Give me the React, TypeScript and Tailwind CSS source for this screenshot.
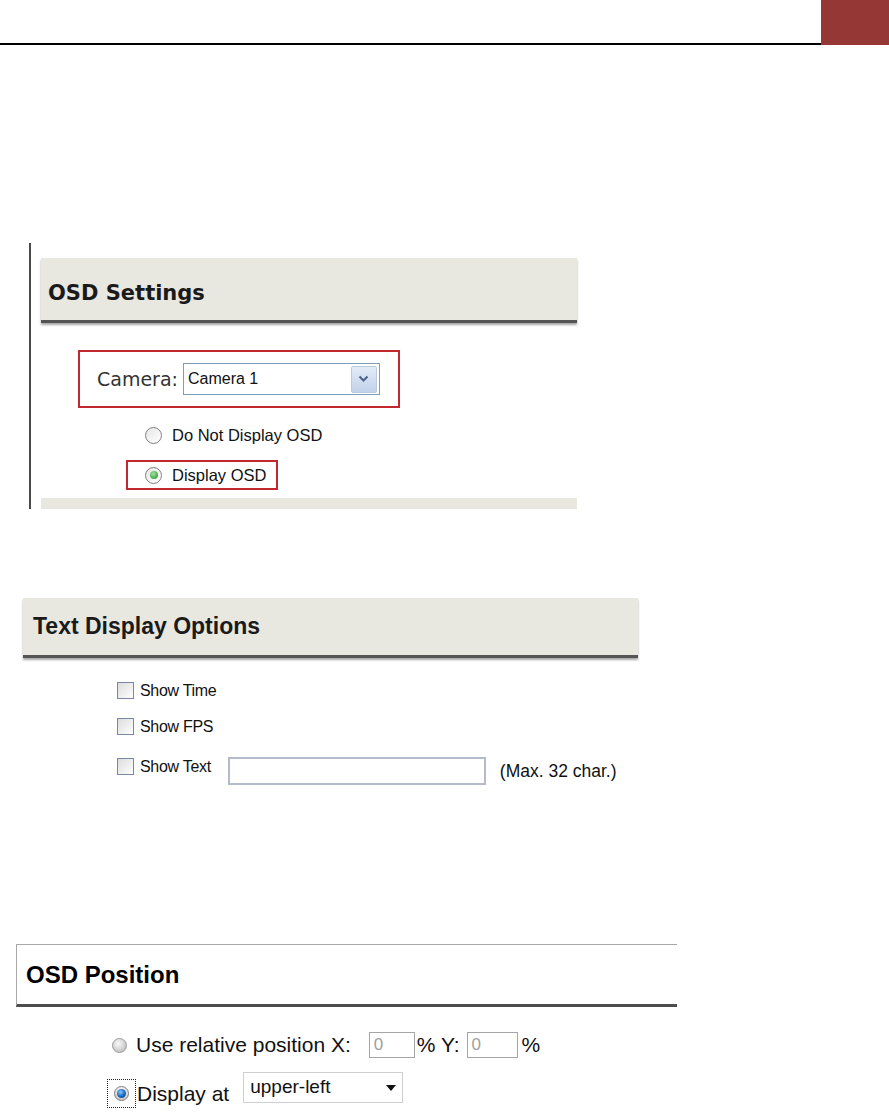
import React from 'react';

const band = 'bg-[#e8e7e0] border-b-[3px] border-[#555555] shadow-[0_2px_2px_rgba(0,0,0,0.35)]';

const XpRadio: React.FC<{ checked?: boolean }> = ({ checked }) => (
  <span className="flex h-[17px] w-[17px] shrink-0 items-center justify-center rounded-full border-[1.5px] border-[#808080] bg-[linear-gradient(135deg,#e6e6e6,#ffffff)]">
    {checked && (
      <span className="h-[8px] w-[8px] rounded-full bg-[radial-gradient(circle_at_40%_35%,#a6e0a0,#42a845_70%)]" />
    )}
  </span>
);

const Checkbox: React.FC = () => (
  <span className="block h-[17px] w-[17px] shrink-0 border-[1.5px] border-[#7b86a6] bg-[linear-gradient(135deg,#dcdcdc,#ffffff)]" />
);

const VistaRadio: React.FC<{ checked?: boolean }> = ({ checked }) =>
  checked ? (
    <span className="flex h-[15px] w-[15px] items-center justify-center rounded-full border border-[#7a7a7a] bg-[linear-gradient(180deg,#f2f2f2,#c8c8c8)]">
      <span className="h-[9px] w-[9px] rounded-full bg-[radial-gradient(circle_at_40%_35%,#8cc8ff,#1466c0_55%,#0a3c78)]" />
    </span>
  ) : (
    <span className="h-[15px] w-[15px] shrink-0 rounded-full border border-[#9a9a9a] bg-[radial-gradient(circle_at_40%_35%,#fafafa,#cfcfcf_60%,#b5b5b5)]" />
  );

export default function App() {
  return (
    <div className="h-[1120px] w-[889px] overflow-hidden bg-white font-['Liberation_Sans',Arial,sans-serif] text-[#111]">
      {/* page header */}
      <div className="flex h-[45px]">
        <div className="flex-1 border-b-2 border-black" />
        <div className="w-[68px] bg-[#953735]" />
      </div>

      {/* OSD Settings */}
      <div className="ml-[29px] mt-[198px] w-[548px] border-l-2 border-[#4a4a4a] pt-[15px]">
        <div className={`ml-[10px] flex h-[65px] items-center pl-[7px] pt-[10px] ${band}`}>
          <span className="font-['DejaVu_Sans',Verdana,sans-serif] text-[21px] font-bold text-[#1a1a1a]">OSD Settings</span>
        </div>

        <div className="ml-[47px] mt-[27px] flex h-[58px] w-[322px] items-center border-2 border-[#c1272d] pl-[17px]">
          <span className="font-['DejaVu_Sans',Verdana,sans-serif] text-[19px] text-[#333]">Camera:</span>
          <div className="ml-[5px] flex h-[32px] w-[197px] items-center border border-[#7f9db9] bg-white pl-[4px] pr-[2px]">
            <span className="flex-1 text-[16px] text-[#111]">Camera 1</span>
            <span className="flex h-[27px] w-[26px] items-center justify-center rounded-[2px] border border-[#b9c9e0] bg-[linear-gradient(180deg,#e3ebf7,#c2d2ea)]">
              <svg width="11" height="8" viewBox="0 0 11 8">
                <path d="M1.5 1.5 L5.5 5.5 L9.5 1.5" fill="none" stroke="#4d6185" strokeWidth="2" />
              </svg>
            </span>
          </div>
        </div>

        <div className="ml-[114px] mt-[15px] flex h-[24px] items-center">
          <XpRadio />
          <span className="ml-[10px] text-[16.5px]">Do Not Display OSD</span>
        </div>

        <div className="ml-[95px] mt-[13px] flex h-[30px] w-[152px] items-center border-2 border-[#c1272d] pl-[17px]">
          <XpRadio checked />
          <span className="ml-[10px] text-[16.5px]">Display OSD</span>
        </div>

        <div className="ml-[10px] mt-[8px] h-[11px] bg-[#e8e7e0]" />
      </div>

      {/* Text Display Options */}
      <div className="ml-[23px] mt-[89px] w-[615px]">
        <div className={`flex h-[60px] items-center pl-[10px] ${band}`}>
          <span className="text-[23px] font-bold text-[#1a1a1a]">Text Display Options</span>
        </div>
      </div>
      <div className="pl-[117px]">
        <div className="mt-[24px] flex h-[17px] items-center">
          <Checkbox />
          <span className="ml-[6px] text-[16px] tracking-[-0.3px]">Show Time</span>
        </div>
        <div className="mt-[19px] flex h-[17px] items-center">
          <Checkbox />
          <span className="ml-[6px] text-[16px] tracking-[-0.3px]">Show FPS</span>
        </div>
        <div className="mt-[22px] flex items-start">
          <span className="mt-[1px] flex">
            <Checkbox />
          </span>
          <span className="ml-[6px] mt-[1px] text-[16px] leading-[17px] tracking-[-0.3px]">Show Text</span>
          <span className="ml-[17px] h-[28px] w-[258px] border-2 border-[#b4bccb] bg-white" />
          <span className="ml-[14px] mt-[3px] text-[17.5px] leading-[22px]">(Max. 32 char.)</span>
        </div>
      </div>

      {/* OSD Position */}
      <div className="ml-[16px] mt-[159px] flex h-[63px] w-[661px] items-center border-l border-t border-[#a8a8a8] border-b-[3px] border-b-[#4d4d4d] pl-[9px]">
        <span className="text-[24px] font-bold text-black">OSD Position</span>
      </div>

      <div className="ml-[112px] mt-[25px] flex h-[26px] items-center text-[21px] text-[#111]">
        <VistaRadio />
        <span className="ml-[9px]">Use relative position X:</span>
        <span className="ml-[18px] flex h-[26px] w-[46px] items-center border border-[#a5a5a5] pl-[4px] text-[17px] text-[#a0a0a0]">0</span>
        <span className="ml-[2px]">% Y:</span>
        <span className="ml-[7px] flex h-[26px] w-[51px] items-center border border-[#a5a5a5] pl-[4px] text-[17px] text-[#a0a0a0]">0</span>
        <span className="ml-[4px]">%</span>
      </div>

      <div className="ml-[107px] mt-[14px] flex items-start text-[21px] text-[#111]">
        <span className="mt-[7px] flex h-[29px] w-[29px] items-center justify-center border border-dotted border-[#222]">
          <VistaRadio checked />
        </span>
        <span className="ml-[1px] mt-[7px] leading-[29px]">Display at</span>
        <div className="ml-[14px] flex h-[31px] w-[160px] items-center border border-[#cfcfcf] bg-white pl-[6px] pr-[6px]">
          <span className="flex-1 text-[19px]">upper-left</span>
          <svg width="10" height="6" viewBox="0 0 10 6">
            <path d="M0 0 H10 L5 6 Z" fill="#111" />
          </svg>
        </div>
      </div>
    </div>
  );
}
